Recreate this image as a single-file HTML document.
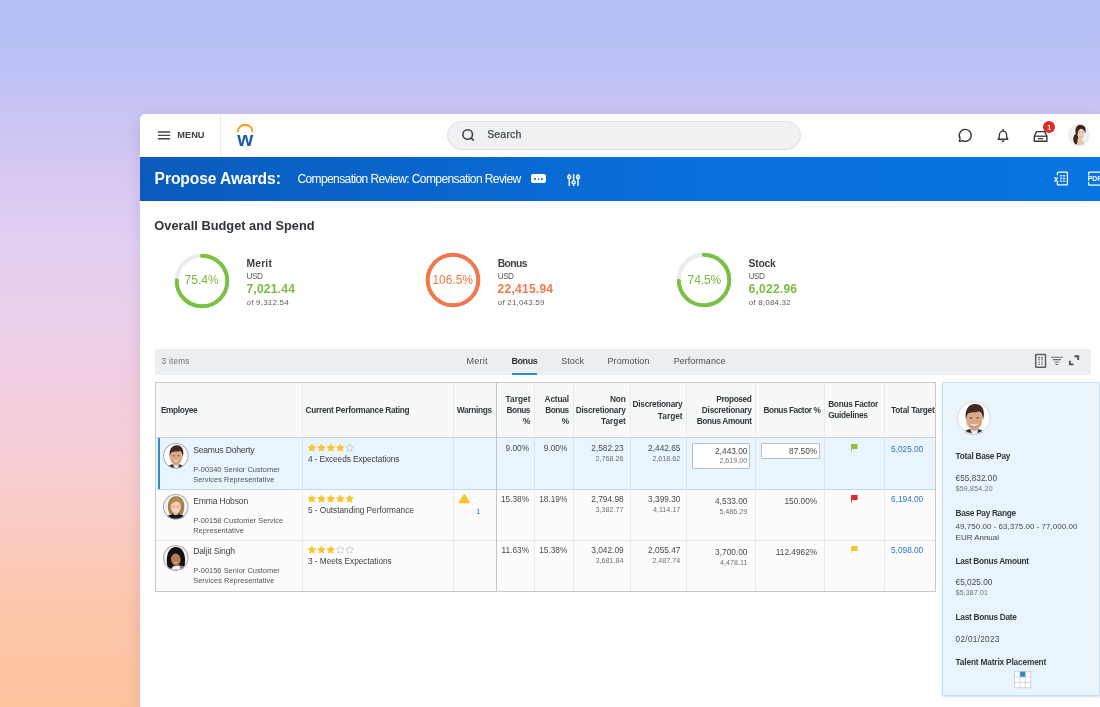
<!DOCTYPE html>
<html lang="en">
<head>
<meta charset="utf-8">
<title>Propose Awards</title>
<style>
*{box-sizing:border-box;margin:0;padding:0}
html,body{width:1100px;height:707px;overflow:hidden}
body{font-family:"Liberation Sans",sans-serif;color:#333;position:relative;
background:linear-gradient(180deg,#b8c1f7 0px,#b9c1f7 45px,#c5c4f4 100px,#d8c9f2 180px,#e3d0f2 246px,#ecd0e9 330px,#f1cee0 383px,#f7ced2 470px,#facbbf 540px,#fcc7ac 600px,#fdc39d 707px);}
#win{position:absolute;left:140px;top:114px;width:960px;height:593px;background:#fff;border-top-left-radius:5px;box-shadow:-1px 6px 16px rgba(70,50,110,.13)}
#clip{position:absolute;left:0;top:0;width:960px;height:593px;overflow:hidden;border-top-left-radius:5px;will-change:transform}
.t{position:absolute;white-space:nowrap;font-family:"Liberation Sans",sans-serif}
.a{position:absolute}
#bluebar{left:0;top:43px;width:960px;height:44px;background:linear-gradient(90deg,#0b5bbc 0%,#0a66cd 30%,#0870dc 60%,#0874e1 100%)}
#vdiv{left:80px;top:0;width:1px;height:43px;background:#ececec}
#search{left:307px;top:6.5px;width:354px;height:29.5px;border-radius:15px;background:#f0f1f3;border:1px solid #dddfe2}
#tool{left:15px;top:234.7px;width:936px;height:26.8px;background:#ebeff2;border-radius:2px}
#tabline{left:371.9px;top:259px;width:25px;height:2px;background:#2d8bd6}
svg{position:absolute;overflow:visible}
</style>
</head>
<body>
<div id="win"><div id="clip">
<div class="a" id="vdiv"></div>
<div class="a" id="search"></div>
<div class="a" id="bluebar"></div>
<div class="a" id="tool"></div>
<div class="a" id="tabline"></div>
<svg style="left:17.00px;top:15.00px" width="14" height="12" viewBox="0 0 14 12"><path d="M1.4 3h11.3M1.4 6.35h11.3M1.4 9.7h11.3" stroke="#43484e" stroke-width="1.4" stroke-linecap="round"/></svg>
<svg style="left:92.00px;top:6.00px" width="26" height="30" viewBox="0 0 26 30"><path d="M5.9 11.4 A7.3 6.5 0 0 1 20.5 11.4" fill="none" stroke="#efa22e" stroke-width="2.1" stroke-linecap="round"/><text x="13.2" y="25.9" text-anchor="middle" font-family="Liberation Sans,sans-serif" font-size="20.5" font-weight="700" fill="#1c5bab">w</text></svg>
<svg style="left:320.00px;top:13.00px" width="16" height="16" viewBox="0 0 16 16"><circle cx="7.7" cy="7.5" r="4.8" fill="none" stroke="#3d4248" stroke-width="1.55"/><path d="M11.3 11.1 L13.4 13.2" stroke="#3d4248" stroke-width="1.55" stroke-linecap="round"/></svg>
<svg style="left:816.00px;top:12.00px" width="18" height="18" viewBox="0 0 18 18"><path d="M9.3 3.4 a6 6 0 1 1 -3.1 11.15 l-2.9 0.85 l0.85 -2.8 a6 6 0 0 1 5.15 -9.2z" fill="none" stroke="#33373c" stroke-width="1.35" stroke-linejoin="round"/></svg>
<svg style="left:854.00px;top:12.00px" width="18" height="18" viewBox="0 0 18 18"><path d="M4.2 13.2 c1.2 -1.2 1.3 -2.4 1.3 -4.6 a3.5 3.5 0 0 1 7 0 c0 2.2 .1 3.4 1.3 4.6 z" fill="none" stroke="#33373c" stroke-width="1.35" stroke-linejoin="round"/><path d="M7.8 14.6 a1.3 1.3 0 0 0 2.4 0" fill="none" stroke="#33373c" stroke-width="1.2"/><path d="M9 3.4v1.2" stroke="#33373c" stroke-width="1.3" stroke-linecap="round"/></svg>
<svg style="left:892.00px;top:14.00px" width="18" height="16" viewBox="0 0 18 16"><path d="M2.3 8.2 L4.6 3.6 H12.6 L14.9 8.2 V13.2 H2.3 Z" fill="none" stroke="#33373c" stroke-width="1.35" stroke-linejoin="round"/><path d="M2.3 8.2 H14.9" stroke="#33373c" stroke-width="1.3"/><path d="M6.4 10.6 H10.8" stroke="#33373c" stroke-width="1.3" stroke-linecap="round"/></svg>
<div class="a" style="left:902.60px;top:6.60px;width:12.80px;height:12.80px;background:#de2b25;border-radius:50%"></div>
<div class="a" style="left:390.80px;top:60.40px;width:15.60px;height:8.80px;background:#fff;border-radius:2px"></div>
<div class="a" style="left:394.30px;top:63.90px;width:1.80px;height:1.80px;background:#0a63c8;border-radius:50%"></div>
<div class="a" style="left:397.70px;top:63.90px;width:1.80px;height:1.80px;background:#0a63c8;border-radius:50%"></div>
<div class="a" style="left:401.10px;top:63.90px;width:1.80px;height:1.80px;background:#0a63c8;border-radius:50%"></div>
<svg style="left:426.00px;top:58.00px" width="16" height="16" viewBox="0 0 16 16"><g stroke="#fff" stroke-width="1.45" fill="none" stroke-linecap="round"><path d="M3.3 2.5v.8M3.3 7v6.6"/><circle cx="3.3" cy="5.1" r="1.55"/><path d="M7.65 2.5v5.6M7.65 12.6v1"/><circle cx="7.65" cy="10.4" r="1.55"/><path d="M12 2.5v.8M12 7v6.6"/><circle cx="12" cy="5.1" r="1.55"/></g></svg>
<svg style="left:913.00px;top:56.00px" width="20" height="18" viewBox="0 0 20 18"><g stroke="#fff" fill="none" stroke-width="1.3" stroke-linejoin="round"><path d="M4.4 5.2V2.9a.7 .7 0 0 1 .7-.7H13.7a.7 .7 0 0 1 .7 .7V14.2a.7 .7 0 0 1-.7 .7H5.1a.7 .7 0 0 1-.7-.7V12"/></g><g fill="#cfe6ff"><rect x="7" y="5" width="2.2" height="1.5"/><rect x="10" y="5" width="2.2" height="1.5"/><rect x="7" y="7.7" width="2.2" height="1.5"/><rect x="10" y="7.7" width="2.2" height="1.5"/><rect x="7" y="10.4" width="2.2" height="1.5"/><rect x="10" y="10.4" width="2.2" height="1.5"/></g><text x="0.7" y="11.5" font-family="Liberation Sans,sans-serif" font-size="8.4" font-weight="700" fill="#fff">x</text></svg>
<svg style="left:946.00px;top:56.00px" width="20" height="18" viewBox="0 0 20 18"><g stroke="#fff" fill="none" stroke-width="1.3" stroke-linejoin="round"><path d="M2.6 5.4V3a.8 .8 0 0 1 .8-.8H15"/><path d="M2.6 12v2.3a.8 .8 0 0 0 .8 .8H15"/></g><text x="1.7" y="11.2" font-family="Liberation Sans,sans-serif" font-size="6.8" font-weight="700" fill="#fff">PDF</text></svg>
<svg style="left:31.60px;top:136.60px" width="60" height="60" viewBox="0 0 60 60"><circle cx="30" cy="30" r="25.3" fill="none" stroke="#e9ebed" stroke-width="4.0"/><path d="M30 4.699999999999999 A25.3 25.3 0 1 1 4.71 29.36" fill="none" stroke="#7ac043" stroke-width="4.0" stroke-linecap="round"/></svg>
<svg style="left:282.70px;top:136.40px" width="60" height="60" viewBox="0 0 60 60"><circle cx="30" cy="30" r="25.3" fill="none" stroke="#e9ebed" stroke-width="4.0"/><circle cx="30" cy="30" r="25.3" fill="none" stroke="#f0784a" stroke-width="4.0"/></svg>
<svg style="left:534.40px;top:136.40px" width="60" height="60" viewBox="0 0 60 60"><circle cx="30" cy="30" r="25.3" fill="none" stroke="#e9ebed" stroke-width="4.0"/><path d="M30 4.699999999999999 A25.3 25.3 0 1 1 4.71 30.79" fill="none" stroke="#7ac043" stroke-width="4.0" stroke-linecap="round"/></svg>
<svg style="left:894.00px;top:238.00px" width="14" height="18" viewBox="0 0 14 18"><g fill="none" stroke="#5a5f65"><rect x="1.7" y="2.4" width="9.8" height="12.8" rx=".5" stroke-width="1.5" fill="#f4f6f8"/><path d="M4.2 5.6h1.8M7.2 5.6h1.8M4.2 7.8h1.8M7.2 7.8h1.8M4.2 10h1.8M7.2 10h1.8M4.2 12.2h1.8M7.2 12.2h1.8" stroke-width="1.1"/></g></svg>
<svg style="left:910.00px;top:238.00px" width="14" height="18" viewBox="0 0 14 18"><g stroke="#6b7076" stroke-width="1.15"><path d="M1 5.2h11.8M2.8 7.6h8.2M4.4 10h5M5.6 12.4h2.6"/></g></svg>
<svg style="left:927.00px;top:238.00px" width="14" height="18" viewBox="0 0 14 18"><g fill="none" stroke="#4f545a" stroke-width="1.9"><path d="M7.5 4.3h3.7v3.7"/><path d="M2.9 8.7v3.7h3.7"/></g></svg>
<div class="a" style="left:14.50px;top:267.80px;width:781.50px;height:210.20px;background:#fcfcfc;border:1px solid #c6cacd"></div>
<div class="a" style="left:15.50px;top:268.80px;width:779.50px;height:54.20px;background:#f7f8f8"></div>
<div class="a" style="left:15.50px;top:323.00px;width:779.50px;height:52.70px;background:#e9f4fc;border-top:1px solid #cdd1d5;border-bottom:1px solid #badaf0"></div>
<div class="a" style="left:15.50px;top:426.10px;width:779.50px;height:1.00px;background:#e1e4e6"></div>
<div class="a" style="left:18.00px;top:324.00px;width:2.00px;height:50.70px;background:#2b8ad8"></div>
<div class="a" style="left:161.80px;top:268.80px;width:1.00px;height:208.20px;background:#e8eaec"></div>
<div class="a" style="left:313.10px;top:268.80px;width:1.00px;height:208.20px;background:#e8eaec"></div>
<div class="a" style="left:355.50px;top:268.80px;width:1.50px;height:208.20px;background:#c2c6c9"></div>
<div class="a" style="left:394.10px;top:268.80px;width:1.00px;height:208.20px;background:#e8eaec"></div>
<div class="a" style="left:433.00px;top:268.80px;width:1.00px;height:208.20px;background:#e8eaec"></div>
<div class="a" style="left:489.50px;top:268.80px;width:1.00px;height:208.20px;background:#e8eaec"></div>
<div class="a" style="left:545.60px;top:268.80px;width:1.00px;height:208.20px;background:#e8eaec"></div>
<div class="a" style="left:614.90px;top:268.80px;width:1.00px;height:208.20px;background:#e8eaec"></div>
<div class="a" style="left:684.30px;top:268.80px;width:1.00px;height:208.20px;background:#e8eaec"></div>
<div class="a" style="left:744.00px;top:268.80px;width:1.00px;height:208.20px;background:#e8eaec"></div>
<div class="a" style="left:161.80px;top:324.00px;width:1.00px;height:50.70px;background:#d6e6f1"></div>
<div class="a" style="left:313.10px;top:324.00px;width:1.00px;height:50.70px;background:#d6e6f1"></div>
<div class="a" style="left:394.10px;top:324.00px;width:1.00px;height:50.70px;background:#d6e6f1"></div>
<div class="a" style="left:433.00px;top:324.00px;width:1.00px;height:50.70px;background:#d6e6f1"></div>
<div class="a" style="left:489.50px;top:324.00px;width:1.00px;height:50.70px;background:#d6e6f1"></div>
<div class="a" style="left:545.60px;top:324.00px;width:1.00px;height:50.70px;background:#d6e6f1"></div>
<div class="a" style="left:614.90px;top:324.00px;width:1.00px;height:50.70px;background:#d6e6f1"></div>
<div class="a" style="left:684.30px;top:324.00px;width:1.00px;height:50.70px;background:#d6e6f1"></div>
<div class="a" style="left:744.00px;top:324.00px;width:1.00px;height:50.70px;background:#d6e6f1"></div>
<div class="a" style="left:552.00px;top:329.00px;width:58.00px;height:26.00px;background:#fff;border:1px solid #b7c0c7;border-radius:1px"></div>
<div class="a" style="left:621.00px;top:329.00px;width:59.00px;height:16.00px;background:#fff;border:1px solid #b7c0c7;border-radius:1px"></div>
<svg style="left:168.00px;top:329.10px" width="48" height="10" viewBox="0 0 48 10"><polygon points="3.90,1.30 4.99,3.50 7.42,3.86 5.66,5.57 6.07,7.99 3.90,6.85 1.73,7.99 2.14,5.57 0.38,3.86 2.81,3.50" fill="#fbc52c" stroke="#fbc52c" stroke-width="1" stroke-linejoin="round"/><polygon points="13.35,1.30 14.44,3.50 16.87,3.86 15.11,5.57 15.52,7.99 13.35,6.85 11.18,7.99 11.59,5.57 9.83,3.86 12.26,3.50" fill="#fbc52c" stroke="#fbc52c" stroke-width="1" stroke-linejoin="round"/><polygon points="22.80,1.30 23.89,3.50 26.32,3.86 24.56,5.57 24.97,7.99 22.80,6.85 20.63,7.99 21.04,5.57 19.28,3.86 21.71,3.50" fill="#fbc52c" stroke="#fbc52c" stroke-width="1" stroke-linejoin="round"/><polygon points="32.25,1.30 33.34,3.50 35.77,3.86 34.01,5.57 34.42,7.99 32.25,6.85 30.08,7.99 30.49,5.57 28.73,3.86 31.16,3.50" fill="#fbc52c" stroke="#fbc52c" stroke-width="1" stroke-linejoin="round"/><polygon points="41.70,1.00 42.88,3.38 45.50,3.76 43.60,5.62 44.05,8.24 41.70,7.00 39.35,8.24 39.80,5.62 37.90,3.76 40.52,3.38" fill="none" stroke="#bcc1c6" stroke-width=".7" stroke-linejoin="round"/></svg>
<svg style="left:168.00px;top:379.90px" width="48" height="10" viewBox="0 0 48 10"><polygon points="3.90,1.30 4.99,3.50 7.42,3.86 5.66,5.57 6.07,7.99 3.90,6.85 1.73,7.99 2.14,5.57 0.38,3.86 2.81,3.50" fill="#fbc52c" stroke="#fbc52c" stroke-width="1" stroke-linejoin="round"/><polygon points="13.35,1.30 14.44,3.50 16.87,3.86 15.11,5.57 15.52,7.99 13.35,6.85 11.18,7.99 11.59,5.57 9.83,3.86 12.26,3.50" fill="#fbc52c" stroke="#fbc52c" stroke-width="1" stroke-linejoin="round"/><polygon points="22.80,1.30 23.89,3.50 26.32,3.86 24.56,5.57 24.97,7.99 22.80,6.85 20.63,7.99 21.04,5.57 19.28,3.86 21.71,3.50" fill="#fbc52c" stroke="#fbc52c" stroke-width="1" stroke-linejoin="round"/><polygon points="32.25,1.30 33.34,3.50 35.77,3.86 34.01,5.57 34.42,7.99 32.25,6.85 30.08,7.99 30.49,5.57 28.73,3.86 31.16,3.50" fill="#fbc52c" stroke="#fbc52c" stroke-width="1" stroke-linejoin="round"/><polygon points="41.70,1.30 42.79,3.50 45.22,3.86 43.46,5.57 43.87,7.99 41.70,6.85 39.53,7.99 39.94,5.57 38.18,3.86 40.61,3.50" fill="#fbc52c" stroke="#fbc52c" stroke-width="1" stroke-linejoin="round"/></svg>
<svg style="left:168.00px;top:430.60px" width="48" height="10" viewBox="0 0 48 10"><polygon points="3.90,1.30 4.99,3.50 7.42,3.86 5.66,5.57 6.07,7.99 3.90,6.85 1.73,7.99 2.14,5.57 0.38,3.86 2.81,3.50" fill="#fbc52c" stroke="#fbc52c" stroke-width="1" stroke-linejoin="round"/><polygon points="13.35,1.30 14.44,3.50 16.87,3.86 15.11,5.57 15.52,7.99 13.35,6.85 11.18,7.99 11.59,5.57 9.83,3.86 12.26,3.50" fill="#fbc52c" stroke="#fbc52c" stroke-width="1" stroke-linejoin="round"/><polygon points="22.80,1.30 23.89,3.50 26.32,3.86 24.56,5.57 24.97,7.99 22.80,6.85 20.63,7.99 21.04,5.57 19.28,3.86 21.71,3.50" fill="#fbc52c" stroke="#fbc52c" stroke-width="1" stroke-linejoin="round"/><polygon points="32.25,1.00 33.43,3.38 36.05,3.76 34.15,5.62 34.60,8.24 32.25,7.00 29.90,8.24 30.35,5.62 28.45,3.76 31.07,3.38" fill="none" stroke="#bcc1c6" stroke-width=".7" stroke-linejoin="round"/><polygon points="41.70,1.00 42.88,3.38 45.50,3.76 43.60,5.62 44.05,8.24 41.70,7.00 39.35,8.24 39.80,5.62 37.90,3.76 40.52,3.38" fill="none" stroke="#bcc1c6" stroke-width=".7" stroke-linejoin="round"/></svg>
<svg style="left:318.00px;top:379.00px" width="13" height="11" viewBox="0 0 13 11"><path d="M6.3 1.6 L11.4 9.6 H1.2 Z" fill="#f8c32a" stroke="#f8c32a" stroke-width="1.2" stroke-linejoin="round"/></svg>
<svg style="left:711.00px;top:330.00px" width="9" height="9" viewBox="0 0 9 9"><path d="M0.5 0.4v7.4" stroke="#94bf3e" stroke-width="1" opacity=".8"/><rect x="0.1" y="0" width="6.5" height="5" rx=".5" fill="#94bf3e"/></svg>
<svg style="left:711.00px;top:380.70px" width="9" height="9" viewBox="0 0 9 9"><path d="M0.5 0.4v7.4" stroke="#dd2c26" stroke-width="1" opacity=".8"/><rect x="0.1" y="0" width="6.5" height="5" rx=".5" fill="#dd2c26"/></svg>
<svg style="left:711.00px;top:432.40px" width="9" height="9" viewBox="0 0 9 9"><path d="M0.5 0.4v7.4" stroke="#f9c531" stroke-width="1" opacity=".8"/><rect x="0.1" y="0" width="6.5" height="5" rx=".5" fill="#f9c531"/></svg>
<div class="a" style="left:802.00px;top:267.60px;width:158.00px;height:314.10px;background:#e9f4fc;border:1px solid #c6e0f2;border-radius:2px;box-shadow:0 1px 2.5px rgba(60,90,120,.22)"></div>
<svg style="left:873.70px;top:557.40px" width="17.3" height="17.3" viewBox="0 0 18 18"><rect x=".5" y=".5" width="17" height="17" fill="#fff" stroke="#c8ccd0" stroke-width=".8"/><path d="M6.2 .5v17M11.8 .5v17M.5 6.2h17M.5 11.8h17" stroke="#c8ccd0" stroke-width=".8"/><rect x="6.4" y=".7" width="5.2" height="5.3" fill="#2f86c8"/></svg>
<svg style="left:23.20px;top:329.20px" width="25.6" height="25.6" viewBox="0 0 100 100"><defs><clipPath id="cseamus176"><circle cx="50" cy="50" r="50"/></clipPath></defs><g clip-path="url(#cseamus176)"><rect width="100" height="100" fill="#fefefe"/><path d="M18 100 C20 86 34 82 50 82 C66 82 80 86 82 100Z" fill="#27313d"/><path d="M38 80 L46 100 H58 L64 80Z" fill="#eef0f3"/><path d="M40 70 h22 v14 q-11 8 -22 0z" fill="#c99476"/><ellipse cx="51" cy="55" rx="24" ry="31" fill="#dba98a"/><path d="M27 56 C20 22 38 7 56 9 C78 10 84 34 77 56 C76 42 72 34 66 31 C54 34 40 32 33 37 C29 42 28 48 27 56Z" fill="#3e2c22"/><path d="M38 67 Q51 80 64 67 Q51 72 38 67Z" fill="#fff"/><path d="M30 62 Q51 100 72 62 Q51 86 30 62" fill="#b9846a" opacity=".45"/><ellipse cx="41" cy="50" rx="4" ry="2" fill="#5a3a2c"/><ellipse cx="61" cy="50" rx="4" ry="2" fill="#5a3a2c"/></g><circle cx="50" cy="50" r="48.05" fill="none" stroke="#a9adb1" stroke-width="3.91"/></svg>
<svg style="left:23.10px;top:380.10px" width="25.6" height="25.6" viewBox="0 0 100 100"><defs><clipPath id="cemma175"><circle cx="50" cy="50" r="50"/></clipPath></defs><g clip-path="url(#cemma175)"><rect width="100" height="100" fill="#f6f4f2"/><path d="M24 74 C10 38 26 8 52 9 C78 9 92 40 78 76 C72 86 30 86 24 74Z" fill="#a67c4e"/><path d="M8 100 C12 84 30 78 50 78 C70 78 88 84 92 100Z" fill="#17171b"/><path d="M42 70 h16 v10 q-8 6 -16 0z" fill="#e4b89c"/><ellipse cx="50" cy="50" rx="20" ry="26" fill="#efcbb2"/><path d="M28 50 C24 22 42 14 54 16 C70 16 78 32 73 50 C68 36 60 28 48 30 C38 32 31 40 28 50Z" fill="#b58a58"/><path d="M41 62 Q50 70 59 62 Q50 65 41 62Z" fill="#fff"/><ellipse cx="42" cy="48" rx="3" ry="1.6" fill="#6a4a38"/><ellipse cx="58" cy="48" rx="3" ry="1.6" fill="#6a4a38"/></g><circle cx="50" cy="50" r="48.05" fill="none" stroke="#a9adb1" stroke-width="3.91"/></svg>
<svg style="left:23.20px;top:431.20px" width="25.6" height="25.6" viewBox="0 0 100 100"><defs><clipPath id="cdaljit176"><circle cx="50" cy="50" r="50"/></clipPath></defs><g clip-path="url(#cdaljit176)"><rect width="100" height="100" fill="#f3f3f3"/><path d="M20 96 C6 44 22 8 50 8 C80 8 94 44 82 96 C70 104 30 104 20 96Z" fill="#17100f"/><path d="M30 100 C34 84 44 80 56 80 C74 80 88 86 92 100Z" fill="#f6f6f6"/><path d="M64 80 L94 98 L72 100Z" fill="#c4202a"/><ellipse cx="50" cy="56" rx="19" ry="25" fill="#b27c5a" transform="rotate(-8 50 56)"/><path d="M28 56 C24 26 40 16 54 18 C70 20 76 36 72 52 C64 38 56 32 44 34 C36 38 30 46 28 56Z" fill="#17100f"/><path d="M40 68 Q49 76 58 66 Q49 71 40 68Z" fill="#fff"/></g><circle cx="50" cy="50" r="48.05" fill="none" stroke="#a9adb1" stroke-width="3.91"/></svg>
<svg style="left:816.60px;top:286.50px" width="33.8" height="33.8" viewBox="0 0 100 100"><defs><clipPath id="cseamus973"><circle cx="50" cy="50" r="50"/></clipPath></defs><g clip-path="url(#cseamus973)"><rect width="100" height="100" fill="#fefefe"/><path d="M18 100 C20 86 34 82 50 82 C66 82 80 86 82 100Z" fill="#27313d"/><path d="M38 80 L46 100 H58 L64 80Z" fill="#eef0f3"/><path d="M40 70 h22 v14 q-11 8 -22 0z" fill="#c99476"/><ellipse cx="51" cy="55" rx="24" ry="31" fill="#dba98a"/><path d="M27 56 C20 22 38 7 56 9 C78 10 84 34 77 56 C76 42 72 34 66 31 C54 34 40 32 33 37 C29 42 28 48 27 56Z" fill="#3e2c22"/><path d="M38 67 Q51 80 64 67 Q51 72 38 67Z" fill="#fff"/><path d="M30 62 Q51 100 72 62 Q51 86 30 62" fill="#b9846a" opacity=".45"/><ellipse cx="41" cy="50" rx="4" ry="2" fill="#5a3a2c"/><ellipse cx="61" cy="50" rx="4" ry="2" fill="#5a3a2c"/></g><circle cx="50" cy="50" r="47.93" fill="none" stroke="#e4e2e8" stroke-width="4.14"/></svg>
<svg style="left:927.50px;top:10.40px" width="21.8" height="21.8" viewBox="0 0 100 100"><defs><clipPath id="cuser1078"><circle cx="50" cy="50" r="50"/></clipPath></defs><g clip-path="url(#cuser1078)"><rect width="100" height="100" fill="#f0f0f0"/><path d="M44 40 C30 44 20 62 26 80 C30 92 40 98 48 96 C44 84 46 64 52 50Z" fill="#3b251b"/><path d="M44 68 C46 80 40 92 38 100 H82 C80 88 70 82 66 74 L64 60Z" fill="#e9c4ae"/><ellipse cx="59" cy="44" rx="17" ry="24" fill="#efcdb9"/><path d="M36 46 C28 16 46 0 62 3 C80 5 84 26 79 42 C76 30 68 22 58 22 C50 24 46 34 44 46 C42 52 38 52 36 46Z" fill="#3b251b"/><path d="M50 56 Q58 62 66 57" stroke="#c98f7c" stroke-width="2.5" fill="none"/><ellipse cx="52" cy="40" rx="3" ry="1.6" fill="#6b4638"/><ellipse cx="67" cy="40" rx="3" ry="1.6" fill="#6b4638"/></g><circle cx="50" cy="50" r="48.62" fill="none" stroke="#ececec" stroke-width="2.75"/></svg>
<span class="t" style="left:37.34px;top:17.00px;font-size:9.2px;line-height:9.2px;color:#3b4046;font-weight:700;letter-spacing:0.014px;">MENU</span>
<span class="t" style="left:347.18px;top:15.00px;font-size:10.5px;line-height:10.5px;color:#42464c;letter-spacing:0.178px;-webkit-text-stroke:0.25px #42464c;">Search</span>
<span class="t" style="left:907.25px;top:10.00px;font-size:7px;line-height:7px;color:#fff;font-weight:700;">1</span>
<span class="t" style="left:14.62px;top:57.00px;font-size:15.6px;line-height:15.6px;color:#fff;font-weight:700;letter-spacing:-0.082px;">Propose Awards:</span>
<span class="t" style="left:157.40px;top:59.00px;font-size:12px;line-height:12px;color:#fff;letter-spacing:-0.590px;">Compensation Review: Compensation Review</span>
<span class="t" style="left:14.36px;top:106.00px;font-size:12.8px;line-height:12.8px;color:#2f3338;font-weight:700;letter-spacing:0.012px;">Overall Budget and Spend</span>
<span class="t" style="left:106.49px;top:145.00px;font-size:10.3px;line-height:10.3px;color:#3d4248;font-weight:700;letter-spacing:0.184px;">Merit</span>
<span class="t" style="left:106.59px;top:159.00px;font-size:8.2px;line-height:8.2px;color:#555a60;letter-spacing:-0.526px;">USD</span>
<span class="t" style="left:106.40px;top:169.00px;font-size:12px;line-height:12px;color:#78bb3f;font-weight:700;letter-spacing:0.260px;">7,021.44</span>
<span class="t" style="left:106.60px;top:185.00px;font-size:8px;line-height:8px;color:#5a5f65;letter-spacing:0.196px;">of 9,312.54</span>
<span class="t" style="left:44.60px;top:160.00px;font-size:12px;line-height:12px;color:#78bb3f;letter-spacing:-0.006px;">75.4%</span>
<span class="t" style="left:357.69px;top:145.00px;font-size:10.3px;line-height:10.3px;color:#3d4248;font-weight:700;letter-spacing:-0.563px;">Bonus</span>
<span class="t" style="left:357.79px;top:159.00px;font-size:8.2px;line-height:8.2px;color:#555a60;letter-spacing:-0.526px;">USD</span>
<span class="t" style="left:357.60px;top:169.00px;font-size:12px;line-height:12px;color:#f0784a;font-weight:700;letter-spacing:0.257px;">22,415.94</span>
<span class="t" style="left:357.80px;top:185.00px;font-size:8px;line-height:8px;color:#5a5f65;letter-spacing:0.193px;">of 21,043.59</span>
<span class="t" style="left:292.40px;top:160.00px;font-size:12px;line-height:12px;color:#f0784a;letter-spacing:-0.017px;">106.5%</span>
<span class="t" style="left:608.59px;top:145.00px;font-size:10.3px;line-height:10.3px;color:#3d4248;font-weight:700;letter-spacing:-0.243px;">Stock</span>
<span class="t" style="left:608.69px;top:159.00px;font-size:8.2px;line-height:8.2px;color:#555a60;letter-spacing:-0.526px;">USD</span>
<span class="t" style="left:608.50px;top:169.00px;font-size:12px;line-height:12px;color:#78bb3f;font-weight:700;letter-spacing:0.260px;">6,022.96</span>
<span class="t" style="left:608.70px;top:185.00px;font-size:8px;line-height:8px;color:#5a5f65;letter-spacing:0.196px;">of 8,084.32</span>
<span class="t" style="left:547.60px;top:160.00px;font-size:12px;line-height:12px;color:#78bb3f;letter-spacing:-0.086px;">74.5%</span>
<span class="t" style="left:21.59px;top:244.00px;font-size:8.2px;line-height:8.2px;color:#6b7076;letter-spacing:0.247px;">3 items</span>
<span class="t" style="left:326.55px;top:243.00px;font-size:9px;line-height:9px;color:#4a4f55;letter-spacing:0.260px;">Merit</span>
<span class="t" style="left:371.45px;top:243.00px;font-size:9px;line-height:9px;color:#2f3338;font-weight:700;letter-spacing:-0.420px;">Bonus</span>
<span class="t" style="left:421.15px;top:243.00px;font-size:9px;line-height:9px;color:#4a4f55;letter-spacing:0.097px;">Stock</span>
<span class="t" style="left:467.45px;top:243.00px;font-size:9px;line-height:9px;color:#4a4f55;letter-spacing:0.130px;">Promotion</span>
<span class="t" style="left:533.75px;top:243.00px;font-size:9px;line-height:9px;color:#4a4f55;letter-spacing:0.015px;">Performance</span>
<span class="t" style="left:20.89px;top:292.00px;font-size:8.3px;line-height:8.3px;color:#33373c;font-weight:700;letter-spacing:-0.334px;">Employee</span>
<span class="t" style="left:165.58px;top:292.00px;font-size:8.3px;line-height:8.3px;color:#33373c;font-weight:700;letter-spacing:-0.280px;">Current Performance Rating</span>
<span class="t" style="left:316.78px;top:292.00px;font-size:8.3px;line-height:8.3px;color:#33373c;font-weight:700;letter-spacing:-0.321px;">Warnings</span>
<span class="t" style="left:365.60px;top:281.00px;font-size:8.3px;line-height:8.3px;color:#33373c;font-weight:700;letter-spacing:0.013px;">Target</span>
<span class="t" style="left:366.59px;top:292.00px;font-size:8.3px;line-height:8.3px;color:#33373c;font-weight:700;letter-spacing:-0.497px;">Bonus</span>
<span class="t" style="left:383.02px;top:303.00px;font-size:8.3px;line-height:8.3px;color:#33373c;font-weight:700;letter-spacing:-0.061px;">%</span>
<span class="t" style="left:404.61px;top:281.00px;font-size:8.3px;line-height:8.3px;color:#33373c;font-weight:700;letter-spacing:-0.172px;">Actual</span>
<span class="t" style="left:405.29px;top:292.00px;font-size:8.3px;line-height:8.3px;color:#33373c;font-weight:700;letter-spacing:-0.497px;">Bonus</span>
<span class="t" style="left:421.72px;top:303.00px;font-size:8.3px;line-height:8.3px;color:#33373c;font-weight:700;letter-spacing:-0.061px;">%</span>
<span class="t" style="left:469.88px;top:281.00px;font-size:8.3px;line-height:8.3px;color:#33373c;font-weight:700;letter-spacing:-0.104px;">Non</span>
<span class="t" style="left:435.74px;top:292.00px;font-size:8.3px;line-height:8.3px;color:#33373c;font-weight:700;letter-spacing:-0.246px;">Discretionary</span>
<span class="t" style="left:461.00px;top:303.00px;font-size:8.3px;line-height:8.3px;color:#33373c;font-weight:700;letter-spacing:0.013px;">Target</span>
<span class="t" style="left:492.54px;top:286.00px;font-size:8.3px;line-height:8.3px;color:#33373c;font-weight:700;letter-spacing:-0.246px;">Discretionary</span>
<span class="t" style="left:517.80px;top:298.00px;font-size:8.3px;line-height:8.3px;color:#33373c;font-weight:700;letter-spacing:0.013px;">Target</span>
<span class="t" style="left:576.22px;top:281.00px;font-size:8.3px;line-height:8.3px;color:#33373c;font-weight:700;letter-spacing:-0.367px;">Proposed</span>
<span class="t" style="left:561.84px;top:292.00px;font-size:8.3px;line-height:8.3px;color:#33373c;font-weight:700;letter-spacing:-0.246px;">Discretionary</span>
<span class="t" style="left:556.72px;top:303.00px;font-size:8.3px;line-height:8.3px;color:#33373c;font-weight:700;letter-spacing:-0.361px;">Bonus Amount</span>
<span class="t" style="left:623.53px;top:292.00px;font-size:8.3px;line-height:8.3px;color:#33373c;font-weight:700;letter-spacing:-0.452px;">Bonus Factor %</span>
<span class="t" style="left:688.19px;top:286.00px;font-size:8.3px;line-height:8.3px;color:#33373c;font-weight:700;letter-spacing:-0.305px;">Bonus Factor</span>
<span class="t" style="left:688.19px;top:297.00px;font-size:8.3px;line-height:8.3px;color:#33373c;font-weight:700;letter-spacing:-0.309px;">Guidelines</span>
<span class="t" style="left:751.09px;top:292.00px;font-size:8.3px;line-height:8.3px;color:#33373c;font-weight:700;letter-spacing:-0.243px;">Total Target</span>
<span class="t" style="left:53.17px;top:332.00px;font-size:8.6px;line-height:8.6px;color:#3d4248;letter-spacing:-0.204px;">Seamus Doherty</span>
<span class="t" style="left:53.23px;top:352.00px;font-size:7.4px;line-height:7.4px;color:#4d5258;letter-spacing:0.052px;">P-00340 Senior Customer</span>
<span class="t" style="left:53.23px;top:362.00px;font-size:7.4px;line-height:7.4px;color:#4d5258;letter-spacing:0.049px;">Services Representative</span>
<span class="t" style="left:167.88px;top:341.00px;font-size:8.3px;line-height:8.3px;color:#3d4248;letter-spacing:-0.087px;">4 - Exceeds Expectations</span>
<span class="t" style="left:365.58px;top:330.00px;font-size:8.3px;line-height:8.3px;color:#45494f;">9.00%</span>
<span class="t" style="left:403.78px;top:330.00px;font-size:8.3px;line-height:8.3px;color:#45494f;">9.00%</span>
<span class="t" style="left:451.32px;top:330.00px;font-size:8.3px;line-height:8.3px;color:#45494f;">2,582.23</span>
<span class="t" style="left:455.58px;top:341.00px;font-size:7.2px;line-height:7.2px;color:#6c7177;">2,768.26</span>
<span class="t" style="left:508.12px;top:330.00px;font-size:8.3px;line-height:8.3px;color:#45494f;">2,442.65</span>
<span class="t" style="left:512.38px;top:341.00px;font-size:7.2px;line-height:7.2px;color:#6c7177;">2,618.62</span>
<span class="t" style="left:575.12px;top:333.00px;font-size:8.3px;line-height:8.3px;color:#45494f;">2,443.00</span>
<span class="t" style="left:579.38px;top:343.00px;font-size:7.2px;line-height:7.2px;color:#6c7177;">2,619.00</span>
<span class="t" style="left:649.07px;top:333.00px;font-size:8.3px;line-height:8.3px;color:#45494f;">87.50%</span>
<span class="t" style="left:751.09px;top:331.00px;font-size:8.3px;line-height:8.3px;color:#2c76c0;letter-spacing:-0.021px;">5,025.00</span>
<span class="t" style="left:53.17px;top:383.00px;font-size:8.6px;line-height:8.6px;color:#3d4248;letter-spacing:-0.180px;">Emma Hobson</span>
<span class="t" style="left:53.23px;top:403.00px;font-size:7.4px;line-height:7.4px;color:#4d5258;letter-spacing:0.050px;">P-00158 Customer Service</span>
<span class="t" style="left:53.23px;top:413.00px;font-size:7.4px;line-height:7.4px;color:#4d5258;letter-spacing:0.066px;">Representative</span>
<span class="t" style="left:167.88px;top:392.00px;font-size:8.3px;line-height:8.3px;color:#3d4248;letter-spacing:-0.019px;">5 - Outstanding Performance</span>
<span class="t" style="left:360.97px;top:381.00px;font-size:8.3px;line-height:8.3px;color:#45494f;">15.38%</span>
<span class="t" style="left:399.17px;top:381.00px;font-size:8.3px;line-height:8.3px;color:#45494f;">18.19%</span>
<span class="t" style="left:451.32px;top:381.00px;font-size:8.3px;line-height:8.3px;color:#45494f;">2,794.98</span>
<span class="t" style="left:455.58px;top:392.00px;font-size:7.2px;line-height:7.2px;color:#6c7177;">3,382.77</span>
<span class="t" style="left:508.12px;top:381.00px;font-size:8.3px;line-height:8.3px;color:#45494f;">3,399.30</span>
<span class="t" style="left:512.91px;top:392.00px;font-size:7.2px;line-height:7.2px;color:#6c7177;">4,114.17</span>
<span class="t" style="left:575.12px;top:383.00px;font-size:8.3px;line-height:8.3px;color:#45494f;">4,533.00</span>
<span class="t" style="left:579.38px;top:394.00px;font-size:7.2px;line-height:7.2px;color:#6c7177;">5,486.29</span>
<span class="t" style="left:644.45px;top:383.00px;font-size:8.3px;line-height:8.3px;color:#45494f;">150.00%</span>
<span class="t" style="left:751.09px;top:381.00px;font-size:8.3px;line-height:8.3px;color:#2c76c0;letter-spacing:-0.021px;">6,194.00</span>
<span class="t" style="left:53.17px;top:433.00px;font-size:8.6px;line-height:8.6px;color:#3d4248;letter-spacing:-0.142px;">Daljit Singh</span>
<span class="t" style="left:53.23px;top:453.00px;font-size:7.4px;line-height:7.4px;color:#4d5258;letter-spacing:0.052px;">P-00156 Senior Customer</span>
<span class="t" style="left:53.23px;top:463.00px;font-size:7.4px;line-height:7.4px;color:#4d5258;letter-spacing:0.049px;">Services Representative</span>
<span class="t" style="left:167.88px;top:443.00px;font-size:8.3px;line-height:8.3px;color:#3d4248;letter-spacing:-0.026px;">3 - Meets Expectations</span>
<span class="t" style="left:361.58px;top:432.00px;font-size:8.3px;line-height:8.3px;color:#45494f;">11.63%</span>
<span class="t" style="left:399.17px;top:432.00px;font-size:8.3px;line-height:8.3px;color:#45494f;">15.38%</span>
<span class="t" style="left:451.32px;top:432.00px;font-size:8.3px;line-height:8.3px;color:#45494f;">3,042.09</span>
<span class="t" style="left:455.58px;top:443.00px;font-size:7.2px;line-height:7.2px;color:#6c7177;">3,681.84</span>
<span class="t" style="left:508.12px;top:432.00px;font-size:8.3px;line-height:8.3px;color:#45494f;">2,055.47</span>
<span class="t" style="left:512.38px;top:443.00px;font-size:7.2px;line-height:7.2px;color:#6c7177;">2,487.74</span>
<span class="t" style="left:575.12px;top:434.00px;font-size:8.3px;line-height:8.3px;color:#45494f;">3,700.00</span>
<span class="t" style="left:579.91px;top:445.00px;font-size:7.2px;line-height:7.2px;color:#6c7177;">4,478.11</span>
<span class="t" style="left:635.84px;top:434.00px;font-size:8.3px;line-height:8.3px;color:#45494f;">112.4962%</span>
<span class="t" style="left:751.09px;top:432.00px;font-size:8.3px;line-height:8.3px;color:#2c76c0;letter-spacing:-0.021px;">5,098.00</span>
<span class="t" style="left:336.20px;top:394.00px;font-size:8px;line-height:8px;color:#2c76c0;">1</span>
<span class="t" style="left:815.59px;top:338.00px;font-size:8.3px;line-height:8.3px;color:#33373c;font-weight:700;letter-spacing:-0.271px;">Total Base Pay</span>
<span class="t" style="left:815.59px;top:361.00px;font-size:8.2px;line-height:8.2px;color:#45494f;letter-spacing:0.044px;">€55,832.00</span>
<span class="t" style="left:815.65px;top:371.00px;font-size:7px;line-height:7px;color:#6c7177;letter-spacing:0.215px;">$59,854.20</span>
<span class="t" style="left:815.59px;top:395.00px;font-size:8.3px;line-height:8.3px;color:#33373c;font-weight:700;letter-spacing:-0.318px;">Base Pay Range</span>
<span class="t" style="left:815.60px;top:409.00px;font-size:8px;line-height:8px;color:#45494f;letter-spacing:0.024px;">49,750.00 - 63,375.00 - 77,000.00</span>
<span class="t" style="left:815.60px;top:420.00px;font-size:8px;line-height:8px;color:#45494f;letter-spacing:-0.029px;">EUR Annual</span>
<span class="t" style="left:815.59px;top:443.00px;font-size:8.3px;line-height:8.3px;color:#33373c;font-weight:700;letter-spacing:-0.323px;">Last Bonus Amount</span>
<span class="t" style="left:815.59px;top:465.00px;font-size:8.2px;line-height:8.2px;color:#45494f;letter-spacing:0.043px;">€5,025.00</span>
<span class="t" style="left:815.65px;top:475.00px;font-size:7px;line-height:7px;color:#6c7177;letter-spacing:0.149px;">$5,387.01</span>
<span class="t" style="left:815.59px;top:499.00px;font-size:8.3px;line-height:8.3px;color:#33373c;font-weight:700;letter-spacing:-0.296px;">Last Bonus Date</span>
<span class="t" style="left:815.59px;top:522.00px;font-size:8.2px;line-height:8.2px;color:#45494f;letter-spacing:0.314px;">02/01/2023</span>
<span class="t" style="left:815.59px;top:544.00px;font-size:8.3px;line-height:8.3px;color:#33373c;font-weight:700;letter-spacing:-0.167px;">Talent Matrix Placement</span>
</div></div>
</body>
</html>
